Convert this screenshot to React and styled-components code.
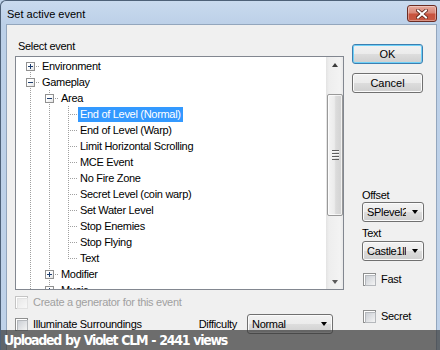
import React from 'react';
import styled, { createGlobalStyle, css } from 'styled-components';

const Global = createGlobalStyle`
  html, body { margin: 0; padding: 0; background: #bfd3ea; }
  body { font-family: "Liberation Sans", Arial, sans-serif; }
  * { box-sizing: border-box; }
`;

const Window = styled.div`
  position: relative;
  width: 440px;
  height: 350px;
  overflow: hidden;
  display: flex;
  flex-direction: column;
  background: linear-gradient(to bottom, #c9daee 0px, #bcd0e8 24px, #bfd2e9 100%);
  border-top: 1px solid #4e6178;
  border-left: 1px solid #4e6178;
  border-top-left-radius: 6px;
  padding: 0 3px 0 5px;
  font-family: "Liberation Sans", Arial, sans-serif;
  font-size: 11px;
  letter-spacing: -0.3px;
  color: #000;
`;

const TitleBar = styled.div`
  height: 23px;
  flex: none;
  display: flex;
  align-items: flex-start;
  justify-content: space-between;
`;

const Title = styled.div`
  padding: 7px 0 0 1px;
  font-size: 11px;
  letter-spacing: 0;
  line-height: 13px;
  color: #000;
`;

const CloseButton = styled.div`
  width: 30px;
  height: 17px;
  margin: 4px 0 0 0;
  border: 1px solid #6b2c23;
  border-radius: 3px;
  background: linear-gradient(to bottom, #e6a99d 0%, #d98878 45%, #c8523d 55%, #c75a44 100%);
  box-shadow: inset 0 0 0 1px rgba(255, 255, 255, 0.35);
  display: flex;
  align-items: center;
  justify-content: center;
`;

const Client = styled.div`
  flex: 1;
  display: flex;
  gap: 8px;
  padding: 15px 12px 0 8px;
  background: #f0f0f0;
  border: 1px solid #93a6bd;
  border-bottom: none;
`;

const LeftCol = styled.div`
  width: 329px;
  flex: none;
  display: flex;
  flex-direction: column;
`;

const RightCol = styled.div`
  width: 71px;
  flex: none;
  display: flex;
  flex-direction: column;
  padding-top: 4px;
`;

const FieldLabel = styled.div`
  line-height: 13px;
  height: 13px;
  white-space: nowrap;
  padding-left: ${(p) => p.$indent || 0}px;
  margin-top: ${(p) => p.$top || 0}px;
  margin-bottom: ${(p) => p.$bottom || 0}px;
`;

const TreeBox = styled.div`
  height: 234px;
  border: 1px solid #828790;
  background: #fff;
  display: flex;
`;

const TreeBody = styled.div`
  flex: 1;
  overflow: hidden;
  padding: 1px 0 0 5px;
`;

const Row = styled.div`
  height: 16px;
  display: flex;
  align-items: center;
`;

const dotsV = (from, len) => `repeating-linear-gradient(to bottom, #a0a0a0 0 1px, transparent 1px 2px) 9px ${from}px / 1px ${len}px no-repeat`;
const dotsH = `repeating-linear-gradient(to right, #a0a0a0 0 1px, transparent 1px 2px) 9px 8px / 10px 1px no-repeat`;

const Guide = styled.div`
  width: 19px;
  height: 16px;
  flex: none;
  background: ${(p) => (p.$line ? dotsV(0, 16) : 'none')};
`;

const Connector = styled.div`
  width: 19px;
  height: 16px;
  flex: none;
  display: flex;
  align-items: center;
  justify-content: flex-start;
  padding-left: 5px;
  background: ${(p) => [dotsH, p.$first ? null : dotsV(0, 8), p.$last ? null : dotsV(8, 8)].filter(Boolean).join(', ')};
`;

const Expander = styled.div`
  width: 9px;
  height: 9px;
  border: 1px solid #919191;
  background: linear-gradient(to bottom right, #ffffff 40%, #e2e2e2 100%);
  position: relative;
  display: flex;
  align-items: center;
  justify-content: center;
  margin-top: 1px;
  &::before {
    content: '';
    width: 5px;
    height: 1px;
    background: #1d3d6e;
  }
  ${(p) =>
    p.$plus &&
    css`
      &::after {
        content: '';
        position: absolute;
        left: 3px;
        top: 1px;
        width: 1px;
        height: 5px;
        background: #1d3d6e;
      }
    `}
`;

const ItemLabel = styled.div`
  height: 15px;
  line-height: 15px;
  padding: 0 2px;
  white-space: nowrap;
  ${(p) =>
    p.$selected &&
    css`
      background: #3399ff;
      color: #fff;
    `}
`;

const ScrollBar = styled.div`
  width: 17px;
  flex: none;
  display: flex;
  flex-direction: column;
  background: linear-gradient(to right, #e3e3e3 0, #eeeeee 3px, #f3f3f3 14px, #e9e9e9 100%);
`;

const ScrollArrow = styled.div`
  height: 17px;
  flex: none;
  display: flex;
  align-items: center;
  justify-content: center;
  &::before {
    content: '';
    width: 0;
    height: 0;
    border-left: 3.5px solid transparent;
    border-right: 3.5px solid transparent;
    ${(p) =>
      p.$down
        ? css`border-top: 4px solid #5a5a5a; margin-top: 2px;`
        : css`border-bottom: 4px solid #3c3c3c; margin-bottom: 1px;`}
  }
`;

const Thumb = styled.div`
  height: 122px;
  margin: 20px 0 0 1px;
  width: 16px;
  border: 1px solid #999;
  border-radius: 2px;
  background: linear-gradient(to right, #f4f4f4 0%, #ececec 45%, #dcdcdc 55%, #d2d2d2 100%);
  box-shadow: inset 0 0 0 1px rgba(255, 255, 255, 0.7);
  display: flex;
  align-items: center;
  justify-content: center;
`;

const Grip = styled.div`
  width: 7px;
  height: 10px;
  background: repeating-linear-gradient(to bottom, #5d5d5d 0 1px, #f6f6f6 1px 2px, transparent 2px 3px);
`;

const Spacer = styled.div`
  flex: 1;
`;

const CheckItem = styled.div`
  display: flex;
  align-items: center;
  gap: 5px;
  height: 13px;
  line-height: 13px;
  white-space: nowrap;
  color: ${(p) => (p.$disabled ? '#a0a0a0' : '#000')};
  margin-top: ${(p) => p.$top || 0}px;
  flex: ${(p) => (p.$grow ? 1 : 'none')};
  padding-left: ${(p) => p.$indent || 0}px;
`;

const CheckBox = styled.div`
  width: 13px;
  height: 13px;
  flex: none;
  border: 1px solid ${(p) => (p.$disabled ? '#c4c4c4' : '#8e8f8f')};
  background: #fff;
  padding: 1px;
  &::before {
    content: '';
    display: block;
    width: 9px;
    height: 9px;
    background: ${(p) =>
      p.$disabled
        ? 'linear-gradient(to bottom right, #e8e8e8, #f8f8f8)'
        : 'linear-gradient(to bottom right, #cbcfd5, #f4f4f4)'};
    border: 1px solid ${(p) => (p.$disabled ? '#e2e2e2' : '#b5b8bc')};
  }
`;

const BottomRow = styled.div`
  display: flex;
  align-items: center;
  height: 20px;
  margin-top: 5px;
`;

const winButton = css`
  border: 1px solid #707070;
  border-radius: 3px;
  background: linear-gradient(to bottom, #f2f2f2 0%, #ebebeb 50%, #dddddd 50%, #cfcfcf 100%);
  box-shadow: inset 0 0 0 1px #fbfbfb;
`;

const Button = styled.div`
  ${winButton}
  height: 20px;
  display: flex;
  align-items: center;
  justify-content: center;
  margin-top: ${(p) => p.$top || 0}px;
  line-height: 13px;
  letter-spacing: 0;
  ${(p) =>
    p.$default &&
    css`
      border-color: #3c7fb1;
      box-shadow: inset 0 0 0 1px #6fd1f8;
    `}
`;

const Select = styled.div`
  ${winButton}
  width: ${(p) => p.$w}px;
  height: 20px;
  flex: none;
  display: flex;
  align-items: center;
  padding: 0 5px 0 4px;
  margin-top: ${(p) => p.$top || 0}px;
  margin-left: ${(p) => p.$left || 0}px;
  margin-right: ${(p) => p.$right || 0}px;
`;

const SelectText = styled.div`
  flex: 1;
  overflow: hidden;
  white-space: nowrap;
  line-height: 13px;
`;

const SelectArrow = styled.div`
  flex: none;
  width: 0;
  height: 0;
  margin-left: 6px;
  border-left: 3.5px solid transparent;
  border-right: 3.5px solid transparent;
  border-top: 4px solid #000;
`;

const SideGroup = styled.div`
  display: flex;
  flex-direction: column;
  padding-left: 10px;
  margin-top: 96px;
`;

const Band = styled.div`
  position: absolute;
  left: 0;
  right: 0;
  bottom: 0;
  height: 20px;
  background: rgba(58, 58, 58, 0.72);
  color: #fff;
  font-family: "DejaVu Sans Condensed", "DejaVu Sans", sans-serif;
  font-stretch: condensed;
  font-weight: bold;
  font-size: 14px;
  letter-spacing: -1.3px;
  word-spacing: 1px;
  line-height: 20px;
  padding-left: 3px;
  white-space: nowrap;
`;

const rows = [
  { label: 'Environment', guides: [], exp: 'plus', first: true },
  { label: 'Gameplay', guides: [], exp: 'minus' },
  { label: 'Area', guides: [true], exp: 'minus' },
  { label: 'End of Level (Normal)', guides: [true, true], selected: true },
  { label: 'End of Level (Warp)', guides: [true, true] },
  { label: 'Limit Horizontal Scrolling', guides: [true, true] },
  { label: 'MCE Event', guides: [true, true] },
  { label: 'No Fire Zone', guides: [true, true] },
  { label: 'Secret Level (coin warp)', guides: [true, true] },
  { label: 'Set Water Level', guides: [true, true] },
  { label: 'Stop Enemies', guides: [true, true] },
  { label: 'Stop Flying', guides: [true, true] },
  { label: 'Text', guides: [true, true], last: true },
  { label: 'Modifier', guides: [true], exp: 'plus' },
  { label: 'Music', guides: [true], exp: 'plus' },
];

function CloseGlyph() {
  return (
    <svg width="12" height="10" viewBox="0 0 12 10">
      <path d="M2 1.5 L10 8.5 M10 1.5 L2 8.5" stroke="#5a2119" strokeWidth="3.6" strokeLinecap="square" fill="none" />
      <path d="M2 1.5 L10 8.5 M10 1.5 L2 8.5" stroke="#ffffff" strokeWidth="2" strokeLinecap="square" fill="none" />
    </svg>
  );
}

export default function App() {
  return (
    <>
      <Global />
      <Window>
        <TitleBar>
          <Title>Set active event</Title>
          <CloseButton>
            <CloseGlyph />
          </CloseButton>
        </TitleBar>
        <Client>
          <LeftCol>
            <FieldLabel $indent={3} $bottom={3}>Select event</FieldLabel>
            <TreeBox>
              <TreeBody>
                {rows.map((r) => (
                  <Row key={r.label}>
                    {r.guides.map((g, i) => (
                      <Guide key={i} $line={g} />
                    ))}
                    <Connector $first={r.first} $last={r.last}>
                      {r.exp && <Expander $plus={r.exp === 'plus'} />}
                    </Connector>
                    <ItemLabel $selected={r.selected}>{r.label}</ItemLabel>
                  </Row>
                ))}
              </TreeBody>
              <ScrollBar>
                <ScrollArrow />
                <Thumb>
                  <Grip />
                </Thumb>
                <Spacer />
                <ScrollArrow $down />
              </ScrollBar>
            </TreeBox>
            <CheckItem $disabled $top={6}>
              <CheckBox $disabled />
              Create a generator for this event
            </CheckItem>
            <BottomRow>
              <CheckItem $grow>
                <CheckBox />
                Illuminate Surroundings
              </CheckItem>
              <span>Difficulty</span>
              <Select $w={86} $left={10} $right={11}>
                <SelectText>Normal</SelectText>
                <SelectArrow />
              </Select>
            </BottomRow>
          </LeftCol>
          <RightCol>
            <Button $default>OK</Button>
            <Button $top={9}>Cancel</Button>
            <SideGroup>
              <FieldLabel>Offset</FieldLabel>
              <Select $w={62}>
                <SelectText>SPlevel2</SelectText>
                <SelectArrow />
              </Select>
              <FieldLabel $top={5}>Text</FieldLabel>
              <Select $w={62} $top={1}>
                <SelectText>Castle1ll</SelectText>
                <SelectArrow />
              </Select>
              <CheckItem $top={12} $indent={1}>
                <CheckBox />
                Fast
              </CheckItem>
              <CheckItem $top={24} $indent={1}>
                <CheckBox />
                Secret
              </CheckItem>
            </SideGroup>
          </RightCol>
        </Client>
        <Band>Uploaded by Violet CLM - 2441 views</Band>
      </Window>
    </>
  );
}
